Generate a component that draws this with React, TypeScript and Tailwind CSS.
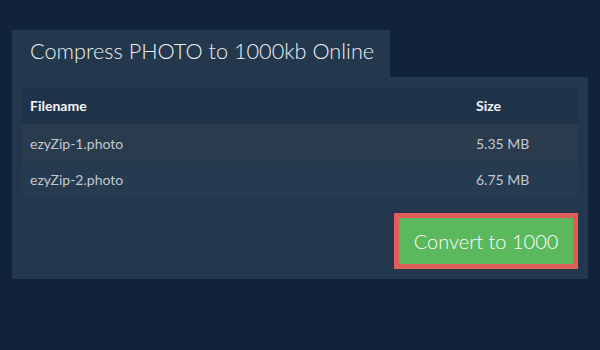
const files = [
  { name: 'ezyZip-1.photo', size: '5.35 MB' },
  { name: 'ezyZip-2.photo', size: '6.75 MB' },
];

export default function App() {
  return (
    <div className="w-[600px] h-[350px] bg-[#11233a] pt-[30px] px-3 font-['Lato','Liberation_Sans',sans-serif]">
      <div className="flex">
        <h1 className="bg-[#23374d] h-[47px] w-[378px] pl-[18px] pt-[6px] text-[21.7px] font-light leading-[30px] text-[#eef0f2]">
          Compress PHOTO to 1000kb Online
        </h1>
      </div>
      <div className="bg-[#23374d] px-[10px] pt-[10px] pb-[10px] flex flex-col">
        <table className="w-full border-collapse text-left">
          <thead>
            <tr className="bg-[#1f3349] h-[37px]">
              <th className="pl-2 text-[14px] font-bold text-[#f4f5f6]">Filename</th>
              <th className="w-[102px] text-[14px] font-bold text-[#f4f5f6]">Size</th>
            </tr>
          </thead>
          <tbody>
            {files.map((f, i) => (
              <tr key={f.name} className={i % 2 === 0 ? 'bg-[#2b3b4e] h-[38px]' : 'bg-[#263a50] h-[35px]'}>
                <td className="pl-2 text-[14px] text-[#c3c8ce]">{f.name}</td>
                <td className="text-[14px] text-[#c3c8ce]">{f.size}</td>
              </tr>
            ))}
          </tbody>
        </table>
        <div className="flex justify-end mt-4">
          <button className="w-[184px] h-[56px] border-[5px] border-[#df5e5b] bg-[#5cb85c] text-[20px] font-light text-white leading-none">
            Convert to 1000
          </button>
        </div>
      </div>
    </div>
  );
}
